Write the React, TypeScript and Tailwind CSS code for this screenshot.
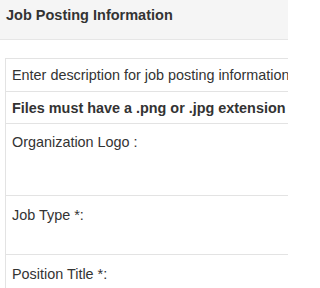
import React from 'react';

interface FieldRow {
    label: string;
    bold?: boolean;
    height: string;
    pad: string;
}

const rows: FieldRow[] = [
    { label: 'Enter description for job posting information', height: 'h-[32px]', pad: 'pt-[6px]' },
    { label: 'Files must have a .png or .jpg extension', bold: true, height: 'h-[32px]', pad: 'pt-[6px]' },
    { label: 'Organization Logo :', height: 'h-[72px]', pad: 'pt-[8px]' },
    { label: 'Job Type *:', height: 'h-[59px]', pad: 'pt-[9px]' },
    { label: 'Position Title *:', height: 'h-[60px]', pad: 'pt-[9px]' },
];

const App: React.FC = () => {
    return (
        <div
            className="w-[288px] h-[288px] overflow-hidden bg-white text-[#333333]"
            style={{ fontFamily: '"Liberation Sans", Arial, sans-serif' }}
        >
            {/* Header */}
            <div className="h-[40px] bg-[#f5f5f5] border-b border-[#e6e6e6] px-[6px] pt-[5px]">
                <h2 className="text-[14.5px] leading-[20px] font-bold whitespace-nowrap">Job Posting Information</h2>
            </div>

            {/* Form table */}
            <div className="mt-[18px] ml-[5px] w-[400px] border border-[#e3e3e3]">
                {rows.map((row, i) => (
                    <div
                        key={row.label}
                        className={`${row.height} ${row.pad} px-[6px] ${i > 0 ? 'border-t border-[#e3e3e3]' : ''}`}
                    >
                        <p className={`text-[14.4px] leading-[20px] whitespace-nowrap ${row.bold ? 'font-bold' : ''}`}>
                            {row.label}
                        </p>
                    </div>
                ))}
            </div>
        </div>
    );
};

export default App;
